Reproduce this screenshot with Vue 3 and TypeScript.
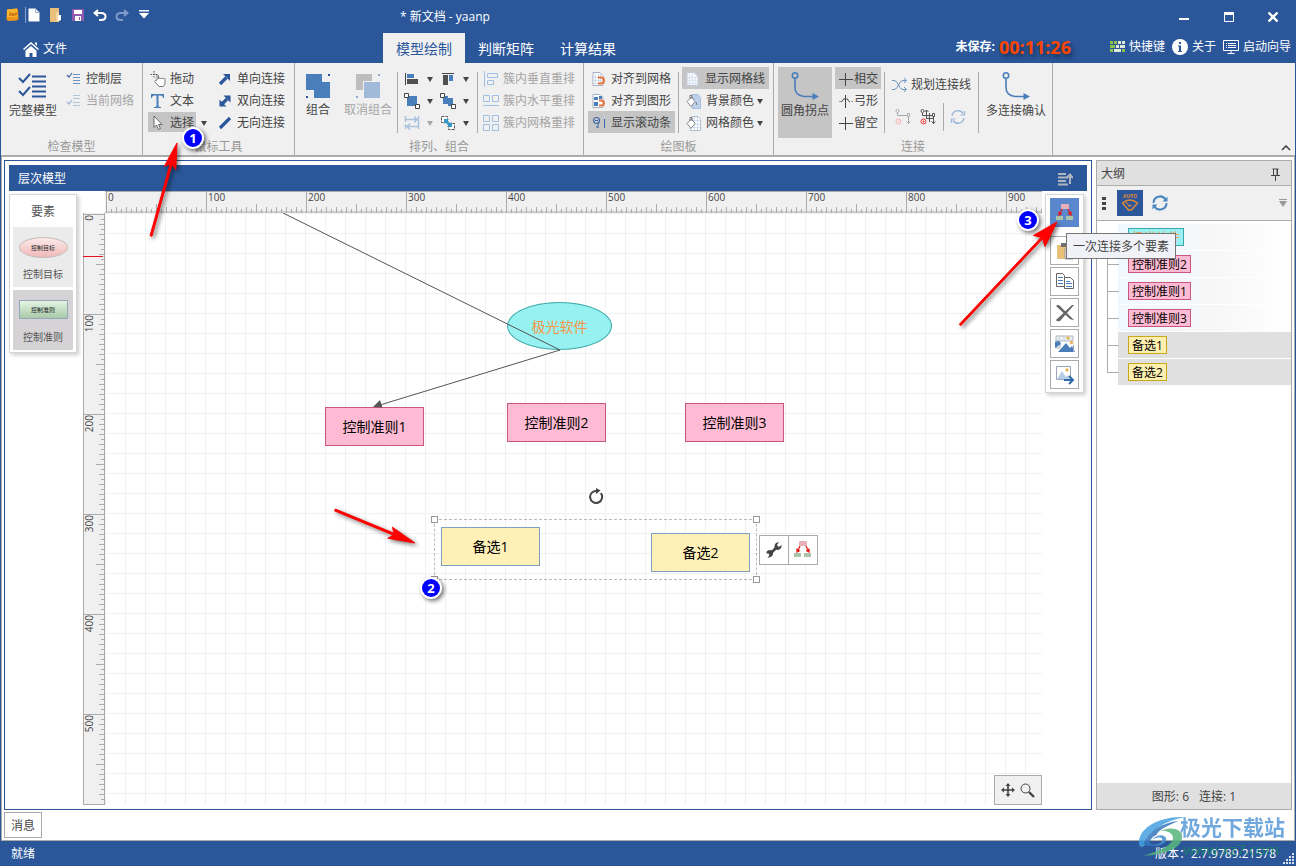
<script setup lang="ts">
import { computed, h, onBeforeUnmount, onMounted, ref } from 'vue'

const shapes: Record<string, [number, number, string]> = {
  logo: [13, 13, '<path d="M1 1.5 11 0.5 12 2 12.5 11 11 12.5 2 13 0.5 11.5Z" fill="#f0951a"/><path d="M1 1.5 11 .5 11 9 1 9Z" fill="#f8b62d"/><path d="M3 8 4.500 4.500 5 8M6 8V5l1.500 3V5M9 8V5h1.500v1.500H9" stroke="#c96f10" fill="none"/>'],
  file: [12, 14, '<path d="M.5.5h7l4 4v9H.5z" fill="#fff"/><path d="M7.500.5v4h4" fill="none" stroke="#9fb4d4"/>'],
  open: [12, 14, '<path d="M0 0h9v14H0z" fill="#e8c07a"/><path d="M6 4h3v7l-1 3-2-2z" fill="#f4d9a5"/><path d="M8 7h3v5l-2 1H8z" fill="#fff"/>'],
  save: [12, 12, '<path d="M0 0h12v12H0z" fill="#8e5bb0"/><path d="M2 1h8v4H2zM3 7h6v5H3z" fill="#fff"/><path d="M7 8h1v3H7z" fill="#8e5bb0"/>'],
  undo: [14, 12, '<path d="M5 1 1.500 4 5 7M2 4h6c6 0 6 7 0 7H6" fill="none" stroke="#fff" stroke-width="2"/>'],
  redo: [14, 12, '<path d="M9 1l3.500 3L9 7M12 4H6c-6 0-6 7 0 7h2" fill="none" stroke="#7f9cc9" stroke-width="2"/>'],
  qat: [10, 9, '<path d="M0 0h10v1.500H0zM0 3h10L5 8.500z" fill="#fff"/>'],
  min: [12, 12, '<path d="M1 7h10v2H1z" fill="#fff"/>'],
  max: [12, 12, '<path d="M1.500 2h9v8.500h-9z" fill="none" stroke="#fff"/><path d="M1 1h10v3H1z" fill="#fff"/>'],
  close: [12, 12, '<path d="M1.500 1.500l9 9M10.500 1.500l-9 9" stroke="#fff" stroke-width="2.400"/>'],
  home: [16, 16, '<path d="M0 8 8 1l8 7-1 1-7-6-7 6zM12 1.500h2V5l-2-2z" fill="#fff"/><path d="M2.500 9.500 8 5l5.500 4.500V16h-4v-4h-3v4h-4z" fill="#fff"/>'],
  keyboard: [15, 13, '<path d="M0 0h3v3H0zM4 0h3v3H4zM0 4h5v3H0zM0 8h3v3H0z" fill="#8ac249"/><path d="M8 0h3v3H8zM12 0h3v3h-3zM6 4h3v3H6zM10 4h5v3h-5zM4 8h7v3H4z" fill="#dfead8"/><path d="M12 8h3v3h-3z" fill="#8ac249"/>'],
  info: [16, 16, '<circle cx="8" cy="8" r="8" fill="#fff"/><path d="M7 3h2v2H7zM6 6.500h3V12h1v1H6v-1h1V7.500H6z" fill="#2b579a"/>'],
  monitor: [16, 15, '<path d="M.5.5h15v10H.5zM8 10v3M4.500 13.500h7" fill="none" stroke="#fff"/><path d="M3 3.500h1m1 0h8M3 5.500h1m1 0h8M3 7.500h1m1 0h8" stroke="#fff"/>'],
  checkBig: [30, 26, '<path d="M1 5l4 4 7-8M1 18l4 4 7-8" fill="none" stroke="#2b579a" stroke-width="2"/><path d="M14 3.500h14M14 8.500h14M14 13.500h14M14 18.500h14M14 23.500h14" stroke="#2b579a" stroke-width="2"/>'],
  check: [16, 14, '<path d="M1 3l2 2 3-4" fill="none" stroke="#3f6ba8" stroke-width="1.200"/><path d="M7 2.500h7M7 5.500h7M7 8.500h7M7 11.500h7" stroke="#6d94c6"/>'],
  checkOff: [16, 14, '<path d="M1 8l2 2 3-4" fill="none" stroke="#9db5d6" stroke-width="1.200"/><path d="M7 1.500h7M7 4.500h7M7 8.500h7M7 11.500h7" stroke="#b3c6df"/>'],
  hand: [16, 16, '<path d="M4 0v7M.5 3.500h7" stroke="#555" stroke-dasharray="1.500 1"/><path d="M7 9V4.500c0-1 1.500-1 1.500 0V8c0-1 2-1 2 0 0-1 2-1 2 0 0-1 2.500-1 2.500.5V12c0 2-1 3-2 3.500H9L5 11c-1-1 .5-2 1-1.500z" fill="#fff" stroke="#777"/>'],
  text: [16, 16, '<path d="M1 1h13v4h-1c-.3-2-1-2.500-4.500-2.500V12c0 2 .5 2 2.500 2v1H4v-1c2 0 2.500 0 2.500-2V2.500C3 2.500 2.300 3 2 5H1z" fill="#4a7ebb"/>'],
  cursor: [16, 16, '<path d="M4 1v11.500l2.500-2.500 2 4.500 2-1-2-4H12z" fill="#fff" stroke="#666"/>'],
  one: [14, 14, '<path d="M2 12 8.500 5.500" stroke="#2b579a" stroke-width="3.200"/><path d="M5 2h7v7z" fill="#2b579a"/>'],
  two: [14, 14, '<path d="M4 10 9 5" stroke="#2b579a" stroke-width="3.200"/><path d="M5.500 1.500h7v7zM1.500 5.500v7h7z" fill="#2b579a"/>'],
  none: [14, 14, '<path d="M2 12 12 2" stroke="#2b579a" stroke-width="3.200"/>'],
  group: [24, 24, '<path d="M0 0h16v8h8v16H8v-8H0z" fill="#4a7ebb"/><path d="M22 0h2v2h-2zM0 22h2v2H0z" fill="#2b579a"/>'],
  ungroup: [24, 24, '<path d="M0 0h16v7H7v9H0z" fill="#bdbdbd"/><path d="M8 8h16v16H8z" fill="#a1bada"/><path d="M22 0h2v2h-2zM0 22h2v2H0z" fill="#8eaed6"/>'],
  alignLeft: [16, 14, '<path d="M1.500 1v12" stroke="#444"/><path d="M3 2h7v4H3z" fill="#4a7ebb"/><path d="M3 7h11v5H3z" fill="#505050"/>'],
  alignTop: [16, 14, '<path d="M2 1.500h12" stroke="#444"/><path d="M3 3h5v10H3z" fill="#505050"/><path d="M9 3h4v6H9z" fill="#4a7ebb"/>'],
  front: [16, 16, '<path d="M3 3h10v10H3z" fill="#4a7ebb"/><path d="M.5.5h4v4h-4zM11.500 11.500h4v4h-4z" fill="#fff" stroke="#444"/>'],
  back: [16, 16, '<path d="M3 3h5v2h5v8H8v-2H3z" fill="#4a7ebb"/><path d="M.5.5h4v4h-4zM11.500 11.500h4v4h-4z" fill="#fff" stroke="#444"/>'],
  sameSize: [16, 16, '<path d="M1.500 1v6M1 4.500h12M10 1.500l3 3-3 3M14.500 1v13M14 11.500H3M6 8.500l-3 3 3 3M1.500 9v5" fill="none" stroke="#a9c1dd" stroke-width="1.500"/>'],
  swap: [16, 16, '<path d="M1.500 1.500h6v6h-6zM8.500 8.500h6v6h-6z" fill="#fff" stroke="#555" stroke-dasharray="3 1"/><path d="M4 4h5L7.500 5.500l3 3L12 7v5H7l1.500-1.500-3-3L4 9z" fill="#3496c9"/>'],
  layV: [16, 16, '<path d="M1.500 0v16M4.500 2.500h10v4h-10zM4.500 9.500h6v4h-6z" fill="none" stroke="#9fc0e2"/>'],
  layH: [16, 12, '<path d="M.5.5h6v6h-6zM9.500.5h6v6h-6zM0 10.500h16" fill="none" stroke="#9fc0e2"/>'],
  layG: [16, 16, '<path d="M.5.5h6v6h-6zM9.500.5h6v6h-6zM.5 9.500h6v6h-6zM9.500 9.500h6v6h-6z" fill="none" stroke="#9fc0e2"/>'],
  snapGrid: [14, 14, '<path d="M1 .5h7l3 3v10H1z" fill="#fff" stroke="#a5b1c0"/><path d="M3.500 2v10M6.500 2v10M8.500 2v10M2 5.500h8M2 8.500h8M2 11.500h8" stroke="#d0dbe9"/><path d="M6 5.500h3c4 0 4 6 0 6H6" fill="none" stroke="#e8743b" stroke-width="2"/>'],
  snapShape: [14, 14, '<path d="M1 .5h7l3 3v10H1z" fill="#fff" stroke="#a5b1c0"/><path d="M2 3h4v3H2zM2 8h4v4H2zM7 2h3v3H7z" fill="#4a7ebb"/><path d="M7 6.500h2c4 0 4 5 0 5H7" fill="none" stroke="#e8743b" stroke-width="2"/>'],
  scroll: [14, 14, '<circle cx="4.500" cy="4.500" r="3" fill="none" stroke="#3b67a8" stroke-width="1.200"/><path d="M3 4.500h3M6 7v5M4 10.500 6 12" fill="none" stroke="#3b67a8"/><path d="M12.500 0v12" stroke="#3b67a8"/><path d="M12 0h1v3h-1z" fill="#c5d3e6"/>'],
  page: [14, 14, '<path d="M1 .5h7l4 4v9H1z" fill="#f5f8fc" stroke="#c0c9d4"/><path d="M3.500 2v11M6.500 2v11M9.500 5v8M2 5.500h9M2 8.500h9M2 11.500h9" stroke="#dbe4ef"/>'],
  bgColor: [15, 15, '<path d="M6 .5h6l2.500 3v11H6z" fill="#bdd2ea" stroke="#a9bfd9"/><path d="M1 7.500 5.500 3 9 7.500 5 12.500z" fill="#fff" stroke="#888"/><path d="M4 5V1.500h2V5M10 8l1 3" fill="none" stroke="#777"/>'],
  gridColor: [15, 15, '<path d="M6 .5h6l2.500 3v11H4z" fill="#fff" stroke="#b3bfcc"/><path d="M8.500 1v13M11.500 1v13M5 4.500h9M5 8.500h9M5 11.500h9" stroke="#cddcee"/><path d="M1 7.500 5.500 3 9 7.500 5 12.500z" fill="#fff" stroke="#888"/><path d="M4 5V1.500h2V5" fill="none" stroke="#777"/>'],
  elbow: [28, 28, '<circle cx="4" cy="3.500" r="2.700" fill="none" stroke="#4a7ebb" stroke-width="1.600"/><path d="M4 6.500v9q0 8 9 9h9" fill="none" stroke="#4a7ebb" stroke-width="1.600"/><path d="M21.500 21 28 24.500 21.500 28z" fill="#4a7ebb"/>'],
  cross: [14, 14, '<path d="M0 7.500h14M6.500 1v13" stroke="#444"/>'],
  hop: [14, 14, '<path d="M0 7.500h2M12 7.500h2" stroke="#999"/><path d="M6.500 1v13M2 8q2-1 2.500-3h4q.5 2 2.500 3" fill="none" stroke="#444"/>'],
  route: [15, 14, '<path d="M0 2.500h2q2 0 3 2l3 5q1 2 3 2h3M0 11.500h2q2 0 3-2l3-5q1-2 3-2h3M12 0l2.500 2.500L12 5M12 9l2.500 2.500L12 14" fill="none" stroke="#6b93c2"/>'],
  linkOff: [16, 16, '<path d="M2.500 4v2.500H12M13.500 8v7M11.500 12.500l2 2 2-2" fill="none" stroke="#aaa"/><circle cx="2.500" cy="2" r="1.500" fill="#fff" stroke="#aaa"/><path d="M12.500 4.500h2v3h-2z" fill="#fff" stroke="#aaa"/><circle cx="3.500" cy="12.500" r="2.500" fill="#fff" stroke="#f5aaaa"/><circle cx="3.500" cy="12.500" r="1" fill="#f5aaaa"/>'],
  linkOn: [16, 16, '<path d="M2.500 4v2.500H12M6.500 1v9M4.500 3l2-2 2 2M6 9.500h7M9.500 4v9M13.500 8v7M11.500 12.500l2 2 2-2" fill="none" stroke="#555"/><circle cx="2.500" cy="2" r="1.500" fill="#fff" stroke="#555"/><path d="M12.500 4.500h2v3h-2z" fill="#fff" stroke="#555"/><circle cx="3.500" cy="12.500" r="2.500" fill="#fff" stroke="#e33"/><circle cx="3.500" cy="12.500" r="1" fill="#e33"/>'],
  syncOff: [16, 16, '<path d="M2 7a6 6 0 0 1 11-2.500M14 9a6 6 0 0 1-11 2.500" fill="none" stroke="#9bb6d8" stroke-width="1.400"/><path d="M14.500 2v4h-4M1.500 14v-4h4" fill="none" stroke="#9bb6d8" stroke-width="1.200"/>'],
  sync: [16, 16, '<path d="M1.500 8a6.500 6.500 0 0 1 12-3.500M14.500 8a6.500 6.500 0 0 1-12 3.500" fill="none" stroke="#4a86c0" stroke-width="2"/><path d="M15.500 1.500v5h-5zM.5 14.500v-5h5z" fill="#4a86c0"/>'],
  chevron: [10, 6, '<path d="M1 5l4-4 4 4" fill="none" stroke="#444" stroke-width="1.600"/>'],
  caret: [6, 5, '<path d="M0 0h6L3 5z" fill="currentColor"/>'],
  sort: [16, 14, '<path d="M1 2h8M1 5.500h10M1 9h8M1 12.500h10" stroke="#aeb5bf" stroke-width="2"/><path d="M13 12V3M9.500 6 13 2.500 16 6" fill="none" stroke="#aeb5bf" stroke-width="2"/>'],
  pin: [11, 13, '<path d="M2.500 1h6M3.500 1v6.500M7.500 1v6.500M1 7.500h9M5.500 8v5" fill="none" stroke="#444"/><path d="M6.500 1h1.500v6H6.500z" fill="#444"/>'],
  auto: [26, 26, '<path d="M5.500 13Q13 7 20.500 13L14.500 20h-3z" fill="none" stroke="#e28a34" stroke-width="1.300"/><path d="M13 17 8 11M11 16q2-2 4 0" stroke="#e28a34" fill="none"/>'],
  multi: [18, 18, '<path d="M5.500 0h7l.5 1v4H5V1z" fill="#e8b0b8"/><path d="M0 12h7v4H0zM10 12h7v4h-7z" fill="#a9c4a9"/><path d="M6 5 3.500 10.500M12 5l2.500 5.500M3 7.500v3.500L6 9.500M15 7.500v3.500L12 9.500" fill="none" stroke="#e31b1b" stroke-width="1.300"/>'],
  paste: [20, 20, '<path d="M2 4h13v14H2z" fill="#e8c07a"/><path d="M6 2h6v4H6z" fill="#707070"/><path d="M10 8h7l1 1v9h-8z" fill="#fff" stroke="#999"/>'],
  copy: [20, 20, '<path d="M1.500 1.500h6l2 2v11h-8z" fill="#fff" stroke="#666"/><path d="M3 5.500h5M3 8.500h5M3 11.500h5" stroke="#4a7ebb"/><path d="M9.500 5.500h6l3 3v8h-9z" fill="#fff" stroke="#666"/><path d="M11 9.500h4M11 11.500h6M11 14.500h6" stroke="#4a7ebb"/>'],
  del: [20, 20, '<path d="M1 3q2-2 4 0l14 14q-2 0-4-1zM17 2h2L5 18q-3 1-4-1z" fill="#666"/>'],
  images: [20, 20, '<path d="M1 2h17v5H1zM1 7h4v7H1z" fill="#e9eef5" stroke="#b0b9c4"/><path d="M7 2h2v5M4 2v5" stroke="#c6cfda" fill="none"/><circle cx="13" cy="4" r="1.700" fill="#e9b35a"/><circle cx="16.500" cy="8.500" r="1.700" fill="#e9b35a"/><path d="M0 14V8l4-1 2 3zM3 18l8-9 4 5 2-2 3 6z" fill="#4a7ebb"/><path d="M18.500 11v7" fill="none" stroke="#9aa7b8"/>'],
  export: [20, 20, '<path d="M1.500 1.500h14v13h-14z" fill="#fff" stroke="#9aa7b8"/><circle cx="12" cy="5" r="1.700" fill="#e9b35a"/><path d="M2 14l5-8 4 6 2-2 2 4z" fill="#b7cde8"/><path d="M9 15h8M14 11l4 4-4 4" fill="none" stroke="#2f6aad" stroke-width="2"/>'],
  wrench: [16, 16, '<path d="M4 12 11 5" stroke="#444" stroke-width="2.600"/><path d="M9 7.500q-1.500-4 1-6.500l3-1-2 3 1 1.500 2 0 1.500-2q.5 4.500-3.500 5.500zM6.500 8.500q1.500 4-1 6l-4 1.500 2-3-1-1.500-2 0q-.500-3 3-3.500z" fill="#444"/>'],
  move: [14, 14, '<path d="M7 1v12M1 7h12" stroke="#444" stroke-width="1.600"/><path d="M4.500 3 7 0l2.500 3zM4.500 11 7 14l2.500-3zM3 4.500 0 7l3 2.500zM11 4.500 14 7l-3 2.500z" fill="#444"/>'],
  search: [15, 15, '<circle cx="5.500" cy="5.500" r="4.500" fill="none" stroke="#444"/><path d="M9 9l5 5" stroke="#444" stroke-width="2.400"/>'],
  rotate: [16, 16, '<path d="M12.800 5.200A6 6 0 1 1 9 3" fill="none" stroke="#444" stroke-width="2"/><path d="M8 0l4.500 2.500L8 6z" fill="#444"/>'],
  grip: [12, 12, '<path d="M9 0h2v2H9zM9 3h2v2H9zM6 3h2v2H6zM9 6h2v2H9zM6 6h2v2H6zM3 6h2v2H3zM9 9h2v2H9zM6 9h2v2H6zM3 9h2v2H3zM0 9h2v2H0z" fill="#dbe3f0"/>'],
}

const Icon = (p: { name: string }) => {
  const [w, ht, body] = shapes[p.name]
  return h('svg', { width: w, height: ht, viewBox: `0 0 ${w} ${ht}`, 'aria-hidden': 'true', class: 'icon', innerHTML: body })
}
Icon.props = ['name']

const quick = [['file', '新建'], ['open', '打开'], ['save', '保存'], ['undo', '撤销'], ['redo', '重做'], ['qat', '自定义']]
const tabs = ['模型绘制', '判断矩阵', '计算结果']
const activeTab = ref(0)

const canvasEl = ref<HTMLElement | null>(null)
const size = ref({ w: 900, h: 500 })
let watcher: ResizeObserver | undefined
function measure() {
  if (canvasEl.value) size.value = { w: canvasEl.value.clientWidth, h: canvasEl.value.clientHeight }
}
onMounted(() => {
  measure()
  watcher = new ResizeObserver(measure)
  if (canvasEl.value) watcher.observe(canvasEl.value)
})
onBeforeUnmount(() => watcher?.disconnect())

const ticks = (n: number) => Array.from({ length: Math.ceil(n / 5) }, (_, i) => {
  const pos = i * 5
  return { pos, len: pos % 100 === 0 ? 22 : pos % 50 === 0 ? 9 : pos % 10 === 0 ? 6 : 4 }
})
const labels = (n: number) => Array.from({ length: Math.floor((n - 25) / 100) + 1 }, (_, i) => i * 100)
const hPath = computed(() => ticks(size.value.w).map(t => `M${t.pos + 1}.5 ${22 - t.len}V22`).join(''))
const vPath = computed(() => ticks(size.value.h).map(t => `M${22 - t.len} ${t.pos + 1}.5H22`).join(''))
const hLabels = computed(() => labels(size.value.w))
const vLabels = computed(() => labels(size.value.h))

const nodes = [
  { t: '控制准则1', x: 220, y: 194, c: 'pink' },
  { t: '控制准则2', x: 402, y: 190, c: 'pink' },
  { t: '控制准则3', x: 580, y: 190, c: 'pink' },
  { t: '备选1', x: 336, y: 314, c: 'yellow' },
  { t: '备选2', x: 546, y: 320, c: 'yellow' },
]
const handles = [[326, 303], [648, 303], [326, 363], [648, 363]]
const outline = [
  { t: '极光软件', c: 'cyan' }, { t: '控制准则2', c: 'pink' }, { t: '控制准则1', c: 'pink' },
  { t: '控制准则3', c: 'pink' }, { t: '备选1', c: 'yellow' }, { t: '备选2', c: 'yellow' },
]
const tools = [['paste', '粘贴'], ['copy', '复制'], ['del', '删除'], ['images', '图形'], ['export', '导出']]

function arrow(x1: number, y1: number, x2: number, y2: number, len: number, half: number) {
  const d = Math.hypot(x2 - x1, y2 - y1)
  const ux = (x2 - x1) / d
  const uy = (y2 - y1) / d
  const at = (back: number, side: number) => `${x2 - ux * back - uy * side},${y2 - uy * back + ux * side}`
  return [at(0, 0), at(len, half), at(len - 4, 1), at(d, 1), at(d, -1), at(len - 4, -1), at(len, -half)].join(' ')
}
const arrows = [arrow(151, 236, 177, 143, 26, 6), arrow(335, 510, 415, 543, 27, 6), arrow(960, 325, 1057, 222, 26, 8)]
const badges = [{ n: 1, x: 193, y: 138 }, { n: 2, x: 431, y: 588 }, { n: 3, x: 1028, y: 220 }]
</script>

<template>
  <div class="app">
    <header class="title">
      <div class="quick">
        <Icon name="logo" />
        <i class="qsep"></i>
        <button v-for="q in quick" :key="q[0]" :aria-label="q[1]"><Icon :name="q[0]" /></button>
      </div>
      <h1>* 新文档 - yaanp</h1>
      <div class="win">
        <button aria-label="最小化"><Icon name="min" /></button>
        <button aria-label="最大化"><Icon name="max" /></button>
        <button aria-label="关闭"><Icon name="close" /></button>
      </div>
    </header>

    <nav class="tabs">
      <button class="filebtn"><Icon name="home" />文件</button>
      <button v-for="(t, i) in tabs" :key="t" class="tab" :class="{ active: i === activeTab }" @click="activeTab = i">{{ t }}</button>
      <div class="links">
        <span class="unsaved">未保存:</span><span class="timer">00:11:26</span>
        <button class="keys"><Icon name="keyboard" />快捷键</button>
        <button><Icon name="info" />关于</button>
        <button><Icon name="monitor" />启动向导</button>
      </div>
    </nav>

    <section class="ribbon">
      <div class="group g1">
        <div class="body">
          <button class="big"><Icon name="checkBig" />完整模型</button>
          <div class="col">
            <button><Icon name="check" />控制层</button>
            <button class="off"><Icon name="checkOff" />当前网络</button>
          </div>
        </div>
        <p>检查模型</p>
      </div>
      <div class="group g2">
        <div class="body">
          <div class="col pick">
            <button><Icon name="hand" />拖动</button>
            <button><Icon name="text" />文本</button>
            <div class="pair"><button class="on"><Icon name="cursor" />选择</button><button class="drop" aria-label="选择方式"><Icon name="caret" /></button></div>
          </div>
          <div class="col">
            <button><Icon name="one" />单向连接</button>
            <button><Icon name="two" />双向连接</button>
            <button><Icon name="none" />无向连接</button>
          </div>
        </div>
        <p>鼠标工具</p>
      </div>
      <div class="group g3">
        <div class="body">
          <button class="big"><Icon name="group" />组合</button>
          <button class="big off"><Icon name="ungroup" />取消组合</button>
          <i class="sep"></i>
          <div class="col arrange">
            <button aria-label="左对齐"><Icon name="alignLeft" /><Icon name="caret" /></button>
            <button aria-label="置前"><Icon name="front" /><Icon name="caret" /></button>
            <button aria-label="同宽" class="off"><Icon name="sameSize" /><Icon name="caret" /></button>
          </div>
          <div class="col arrange">
            <button aria-label="顶对齐"><Icon name="alignTop" /><Icon name="caret" /></button>
            <button aria-label="置后"><Icon name="back" /><Icon name="caret" /></button>
            <button aria-label="交换"><Icon name="swap" /><Icon name="caret" /></button>
          </div>
          <i class="sep"></i>
          <div class="col">
            <button class="off"><Icon name="layV" />簇内垂直重排</button>
            <button class="off"><Icon name="layH" />簇内水平重排</button>
            <button class="off"><Icon name="layG" />簇内网格重排</button>
          </div>
        </div>
        <p>排列、组合</p>
      </div>
      <div class="group g4">
        <div class="body">
          <div class="col">
            <button><Icon name="snapGrid" />对齐到网格</button>
            <button><Icon name="snapShape" />对齐到图形</button>
            <button class="on"><Icon name="scroll" />显示滚动条</button>
          </div>
          <i class="sep"></i>
          <div class="col">
            <button class="on"><Icon name="page" />显示网格线</button>
            <button><Icon name="bgColor" /><span>背景颜色</span><Icon name="caret" /></button>
            <button><Icon name="gridColor" /><span>网格颜色</span><Icon name="caret" /></button>
          </div>
        </div>
        <p>绘图板</p>
      </div>
      <div class="group g5">
        <div class="body">
          <button class="big on"><Icon name="elbow" />圆角拐点</button>
          <div class="col cross">
            <button class="on"><Icon name="cross" />相交</button>
            <button><Icon name="hop" />弓形</button>
            <button><Icon name="cross" />留空</button>
          </div>
          <i class="sep"></i>
          <div class="plan">
            <button><Icon name="route" />规划连接线</button>
            <div class="planrow">
              <button aria-label="移除连接" disabled><Icon name="linkOff" /></button>
              <button aria-label="移除全部"><Icon name="linkOn" /></button>
              <i></i>
              <button aria-label="刷新" disabled><Icon name="syncOff" /></button>
            </div>
          </div>
          <i class="sep"></i>
          <button class="big"><Icon name="elbow" />多连接确认</button>
        </div>
        <p>连接</p>
      </div>
      <button class="collapse" aria-label="折叠功能区"><Icon name="chevron" /></button>
    </section>

    <div class="lower">
      <main class="work">
        <section class="doc">
          <header><span>层次模型</span><Icon name="sort" /></header>
          <div class="board">
            <aside class="palette">
              <h2>要素</h2>
              <button><span class="mini oval">控制目标</span>控制目标</button>
              <button class="sel"><span class="mini rect">控制准则</span>控制准则</button>
            </aside>
            <div class="sheet">
              <svg class="hruler">
                <path :d="hPath" stroke="#ababab" fill="none" />
                <path :d="`M0 .5H${size.w}M0 21H${size.w}`" stroke="#ababab" fill="none" />
                <text v-for="n in hLabels" :key="n" :x="n + 3" y="10">{{ n }}</text>
              </svg>
              <svg class="vruler">
                <path :d="vPath" stroke="#ababab" fill="none" />
                <path :d="`M.5 0V${size.h}M21.500 0V${size.h}`" stroke="#ababab" fill="none" />
                <path d="M0 43.500H20" stroke="#e81123" />
                <text v-for="n in vLabels" :key="n" text-anchor="end" :transform="`translate(10 ${n + 2}) rotate(-90)`">{{ n }}</text>
              </svg>
              <div ref="canvasEl" class="canvas">
                <div class="goal">极光软件</div>
                <div v-for="n in nodes" :key="n.t" class="node" :class="n.c" :style="{ left: n.x + 'px', top: n.y + 'px' }">{{ n.t }}</div>
                <svg class="wires">
                  <path d="M178 0 455 137 275 192" fill="none" stroke="#555" />
                  <path d="M268 194l7-7 2.500 7.500z" fill="#555" />
                </svg>
                <div class="marquee"></div>
                <i v-for="p in handles" :key="p.join()" class="handle" :style="{ left: p[0] + 'px', top: p[1] + 'px' }"></i>
                <button class="rot" aria-label="旋转"><Icon name="rotate" /></button>
                <div class="float">
                  <button aria-label="设置"><Icon name="wrench" /></button>
                  <button aria-label="连接多个"><Icon name="multi" /></button>
                </div>
                <div class="view">
                  <button aria-label="移动"><Icon name="move" /></button>
                  <button aria-label="缩放"><Icon name="search" /></button>
                </div>
              </div>
            </div>
            <aside class="side">
              <button class="hot" aria-label="一次连接多个要素"><Icon name="multi" /></button>
              <button v-for="t in tools" :key="t[0]" :aria-label="t[1]"><Icon :name="t[0]" /></button>
              <span class="tip" role="tooltip">一次连接多个要素</span>
            </aside>
          </div>
        </section>

        <aside class="outline">
          <header><span>大纲</span><Icon name="pin" /></header>
          <div class="bar">
            <i class="dots"></i>
            <button class="auto" aria-label="自动"><Icon name="auto" /><span>AUTO</span></button>
            <button aria-label="刷新"><Icon name="sync" /></button>
            <button class="more" aria-label="更多"><i></i></button>
          </div>
          <ul>
            <li v-for="o in outline" :key="o.t" :class="o.c"><span>{{ o.t }}</span></li>
          </ul>
          <footer><span>图形: 6</span><span>连接: 1</span></footer>
        </aside>
      </main>
      <div class="msg"><button>消息</button></div>
    </div>

    <footer class="status"><span>就绪</span><span class="ver">版本：2.7.9789.21578</span><Icon name="grip" /></footer>

    <div class="brand">
      <svg width="48" height="42" viewBox="0 0 44 42" preserveAspectRatio="none" aria-hidden="true">
        <path d="M1 28C0 14 18 1 43 2 25 6 12 14 7 29 5 33 1 33 1 28Z" fill="#45a0df" />
        <path d="M8 23C15 12 27 7 37 6 27 11 18 15 17 20 12 22 8 29 15 30 5 33 4 28 8 23Z" fill="#3677bd" />
        <path d="M20 16C32 10 43 15 40 25 37 35 23 39 5 41 22 35 33 29 32 22 31 17 25 15 20 16Z" fill="#58b57c" />
        <path d="M13 25c4-6 12-6 13-1 0 5-8 8-14 6 7 0 11-3 10-6-2-3-6-1-9 1Z" fill="#4b91d0" />
      </svg>
      <div><b>极光下载站</b><span>www.xz7.com</span></div>
    </div>

    <svg class="notes" aria-hidden="true">
      <g class="shade">
        <polygon v-for="a in arrows" :key="a" :points="a" fill="#f00" stroke="#f00" />
        <g v-for="b in badges" :key="b.n">
          <circle :cx="b.x" :cy="b.y" r="11" fill="#fff" />
          <circle :cx="b.x" :cy="b.y" r="9" fill="#0000ff" />
        </g>
      </g>
      <text v-for="b in badges" :key="b.n" :x="b.x" :y="b.y + 5" text-anchor="middle">{{ b.n }}</text>
    </svg>
  </div>
</template>

<style>
body { margin: 0; }
</style>

<style scoped>
* { box-sizing: border-box; }
.app { position: relative; display: flex; flex-direction: column; min-height: 100vh; overflow: hidden; background: #2b579a; color: #444; font: 12px/16px "Open Sans", "Noto Sans CJK SC", sans-serif; }
.icon { display: block; flex: none; }
button { display: flex; align-items: center; margin: 0; padding: 0; border: 0; background: none; color: inherit; font: inherit; white-space: nowrap; }
h1, h2, p, ul { margin: 0; padding: 0; font-weight: normal; }
.title { display: grid; grid-template-columns: 400px 1fr auto; align-items: center; height: 33px; color: #fff; }
.title h1 { font-size: 12px; line-height: 16px; }
.quick { display: flex; align-items: center; padding: 0 0 4px 6px; }
.quick button { width: 22px; height: 20px; justify-content: center; }
.qsep { width: 1px; height: 16px; margin-left: 6px; margin-right: -3px; background: #8aa3ca; }
.win { display: flex; }
.win button { width: 45px; height: 30px; justify-content: center; }
.win button:last-child { padding-right: 1px; }
.tabs { display: flex; height: 30px; color: #fff; }
.filebtn { width: 383px; padding: 2px 0 0 23px; gap: 4px; }
.tab { width: 82px; padding-top: 2px; justify-content: center; font-size: 14px; }
.tab.active { background: #f0f0f0; color: #2b579a; }
.links { display: flex; flex: 1; align-items: center; justify-content: flex-end; gap: 7px; padding: 0 5px 2px 0; }
.links button { gap: 4px; }
.links .keys { margin-left: 32px; }
.unsaved { font-weight: bold; }
.timer { margin-left: -3px; color: #ff4500; font-size: 18px; font-weight: bold; text-shadow: 2px 3px 5px #16294a; }
.ribbon { position: relative; display: flex; height: 94px; margin: 0 1px; border-bottom: 2px solid #ababab; background: #f0f0f0; }
.group { display: flex; flex-direction: column; padding-top: 4px; border-right: 1px solid #ababab; }
.group p { margin-top: auto; color: #999; line-height: 16px; text-align: center; }
.g1 { width: 142px; }
.g2 { width: 152px; }
.g3 { width: 289px; }
.g4 { width: 190px; }
.g5 { width: 279px; }
.body { display: flex; height: 71px; padding: 0 4px; }
.col { display: flex; flex-direction: column; }
.col button { height: 22px; padding-top: 2px; gap: 4px; }
.on { background: #c5c5c5; }
.off { color: #a5a5a5; }
.big { flex-direction: column; height: 71px; padding-top: 5px; gap: 3px; }
.g1 .big { width: 56px; padding-top: 6px; gap: 4px; }
.g1 .col { margin-left: 5px; }
.g3 .big { padding-top: 7px; gap: 4px; }
.g3 .body { padding-left: 11px; }
.g3 .big.off { margin-left: 14px; }
.sep { width: 1px; height: 61px; margin: 5px 5px 0; background: #ababab; }
.pick { width: 70px; }
.pick > button, .pick .on { padding-left: 2px; padding-right: 2px; }
.pair { display: flex; }
.pair .on { height: 20px; margin-top: 1px; }
.pair .drop { margin-left: 5px; }
.g2 .body { padding-left: 5px; }
.g2 .col:last-child button { gap: 5px; }
.g3 .arrange { width: 36px; padding-left: 1px; }
.g3 .arrange button { gap: 7px; }
.g3 .arrange + .sep { margin-left: 2px; }
.g4 .col button { width: 87px; padding-left: 4px; gap: 5px; }
.g4 .col span { margin-right: -2px; }
.g4 .sep { margin: 5px 3px 0; }
.g5 .big.on { width: 54px; }
.g5 .cross { margin-left: 3px; }
.g5 .cross button { width: 46px; padding-left: 4px; gap: 1px; }
.g5 .sep { margin: 5px 7px 0 3px; }
.plan { width: 83px; }
.plan > button { height: 36px; gap: 4px; }
.planrow { display: flex; align-items: center; height: 28px; gap: 7px; padding-left: 3px; }
.planrow button + button { margin-left: 2px; }
.planrow i { width: 1px; height: 28px; background: #ababab; }
.planrow i + button { margin-left: -1px; }
.collapse { position: absolute; right: 4px; bottom: 4px; }
.lower { display: flex; flex: 1; flex-direction: column; margin: 0 1px; border: 1px solid #ababab; border-top: 0; background: #fff; }
.work { display: flex; flex: 1; gap: 4px; padding: 3px 2px 0; }
.doc { display: flex; flex: 1; flex-direction: column; min-width: 0; padding: 4px; border: 1px solid #2b579a; }
.doc header { display: flex; align-items: center; justify-content: space-between; height: 26px; padding: 2px 14px 0 9px; background: #2b579a; color: #fff; }
.board { display: flex; flex: 1; }
.palette { display: flex; flex-direction: column; align-self: flex-start; width: 68px; margin-top: 3px; padding: 0 3px 2px; gap: 3px; border: 1px solid #d5d5d5; box-shadow: 2px 2px 4px #ccc; color: #555; }
.palette h2 { height: 29px; font-size: 12px; line-height: 34px; text-align: center; }
.palette button { flex-direction: column; height: 60px; padding-top: 10px; background: #ebebeb; font-size: 10px; }
.palette button.sel { background: #d5d3d5; }
.mini { width: 49px; height: 21px; margin-bottom: 8px; border: 1px solid #c5bcbc; color: #222; font-size: 6px; line-height: 20px; text-align: center; }
.oval { border-radius: 50%; background: linear-gradient(#fdeaea, #efb9b9); }
.rect { height: 19px; margin-bottom: 10px; border-color: #94a9b8; line-height: 18px; background: linear-gradient(#e3f5e3, #a9c9a9); }
.sheet { display: grid; flex: 1; min-width: 0; grid-template: 22px 1fr / 22px 1fr; margin-left: 6px; }
.hruler, .vruler { display: block; width: 100%; background: #f0f0f0; overflow: hidden; }
.hruler { grid-column: 2; height: 22px; }
.vruler { height: 0; min-height: 100%; border-bottom: 1px solid #ababab; }
.hruler text, .vruler text { fill: #444; font-size: 10px; }
.canvas { position: relative; overflow: hidden; background: linear-gradient(90deg, #f1f1f1 1px, transparent 1px) 0 0 / 20px 20px, linear-gradient(#f1f1f1 1px, transparent 1px) 0 0 / 20px 20px, #fff; }
.wires { position: absolute; inset: 0; width: 100%; height: 100%; pointer-events: none; }
.goal { position: absolute; left: 402px; top: 89px; width: 105px; height: 48px; border: 1px solid #3aa8a8; border-radius: 50%; background: #97f1f0; color: #f79646; font-size: 14px; line-height: 48px; text-align: center; }
.node { position: absolute; width: 99px; height: 39px; border: 1px solid #c9567c; background: #ffbbd3; color: #000; font-size: 14px; line-height: 38px; text-align: center; }
.node.yellow { border-color: #7f9fc0; background: #fff0b8; }
.marquee { position: absolute; left: 329px; top: 306px; width: 323px; height: 61px; border: 1px dashed #bbb; }
.handle { position: absolute; width: 7px; height: 7px; border: 1px solid #999; background: #fff; }
.rot { position: absolute; left: 483px; top: 275px; }
.float { position: absolute; left: 654px; top: 322px; display: flex; border: 1px solid #ababab; background: #fff; }
.float button { width: 28px; height: 28px; justify-content: center; }
.float button + button { width: 29px; border-left: 1px solid #ababab; }
.view { position: absolute; right: 0; bottom: 0; display: flex; align-items: center; justify-content: center; width: 48px; height: 30px; gap: 5px; border: 1px solid #ababab; background: #f0f0f0; }
.side { position: relative; display: flex; flex-direction: column; align-self: flex-start; width: 39px; margin: 3px 3px 0 3px; padding: 3px 4px; gap: 2px; border: 1px solid #d5d5d5; box-shadow: 2px 2px 4px #ccc; }
.side button { width: 29px; height: 29px; justify-content: center; border: 1px solid #ababab; background: #fff; }
.side .hot { margin-bottom: 7px; border-color: #5b87cc; background: #5b87cc; }
.tip { position: absolute; left: 20px; top: 38px; z-index: 2; padding: 5px 6px 3px; border: 1px solid #767676; background: #f1f2f7; line-height: 16px; white-space: nowrap; }
.outline { display: flex; flex-direction: column; width: 196px; border: 1px solid #ababab; }
.outline header { display: flex; align-items: center; justify-content: space-between; height: 25px; padding: 2px 10px 0 4px; border-bottom: 1px solid #ababab; background: #e0e0e0; }
.bar { display: flex; align-items: center; height: 35px; padding-left: 5px; border-bottom: 1px solid #ababab; background: #f0f0f0; }
.dots { width: 4px; height: 15px; margin-right: 11px; background: radial-gradient(circle, #444 2px, transparent 2px) 0 0 / 4px 5px; }
.auto { position: relative; width: 26px; height: 26px; margin-right: 9px; background: #2b579a; color: #e28a34; }
.auto span { position: absolute; inset: 3px 0 auto; font-size: 5px; font-weight: bold; line-height: 7px; text-align: center; }
.more { margin-left: auto; padding: 5px 4px; }
.more i { width: 8px; height: 8px; background: #999; clip-path: polygon(0 0, 100% 0, 100% 1px, 0 1px, 0 25%, 100% 25%, 50% 100%, 0 25%); }
.outline ul { display: flex; flex: 1; flex-direction: column; gap: 1px; padding: 3px 0 0 21px; list-style: none; }
.outline li { position: relative; display: flex; align-items: center; height: 26px; padding-left: 10px; background: linear-gradient(90deg, #f0f8ff, #f7f7f7 55%, #fff); color: #000; }
.outline li.yellow { background: #e0e0e0; }
.outline li::before { content: ""; position: absolute; left: -11px; top: -14px; width: 11px; height: 27px; border: solid #ababab; border-width: 0 0 1px 1px; }
.outline li:first-child::before { display: none; }
.outline li span { height: 18px; padding: 1px 3px 0; border: 1px solid #c9567c; background: #ffbbd3; line-height: 16px; }
.outline li.yellow span { border-color: #c9a81c; background: #fff0b0; }
.outline li.cyan span { border-color: #3aa8a8; background: #97f1f0; color: #f79646; }
.outline footer { display: flex; align-items: center; justify-content: center; height: 26px; padding-top: 2px; gap: 10px; background: #e0e0e0; }
.msg { padding: 2px 2px; }
.msg button { height: 26px; padding: 2px 6px 0; border: 1px solid #ababab; background: #fff; }
.status { display: flex; align-items: center; height: 25px; padding-left: 11px; color: #fff; }
.ver { margin-left: auto; margin-right: 7px; }
.status svg { align-self: flex-end; margin: 0 1px 1px 0; }
.brand { position: absolute; right: 11px; bottom: 7px; display: flex; pointer-events: none; opacity: .85; }
.brand div { display: flex; flex-direction: column; margin-left: -6px; }
.brand b { color: #5a9bd8; font-size: 21px; line-height: 24px; }
.brand span { padding-left: 3px; color: #168f58; font-size: 15px; line-height: 20px; opacity: .8; }
.notes { position: absolute; left: 0; top: 0; z-index: 3; width: 100%; height: 100%; pointer-events: none; }
.shade { filter: drop-shadow(2px 2px 2px rgba(0, 0, 0, .55)); }
.notes text { fill: #fff; font-size: 13px; font-weight: bold; }
</style>
